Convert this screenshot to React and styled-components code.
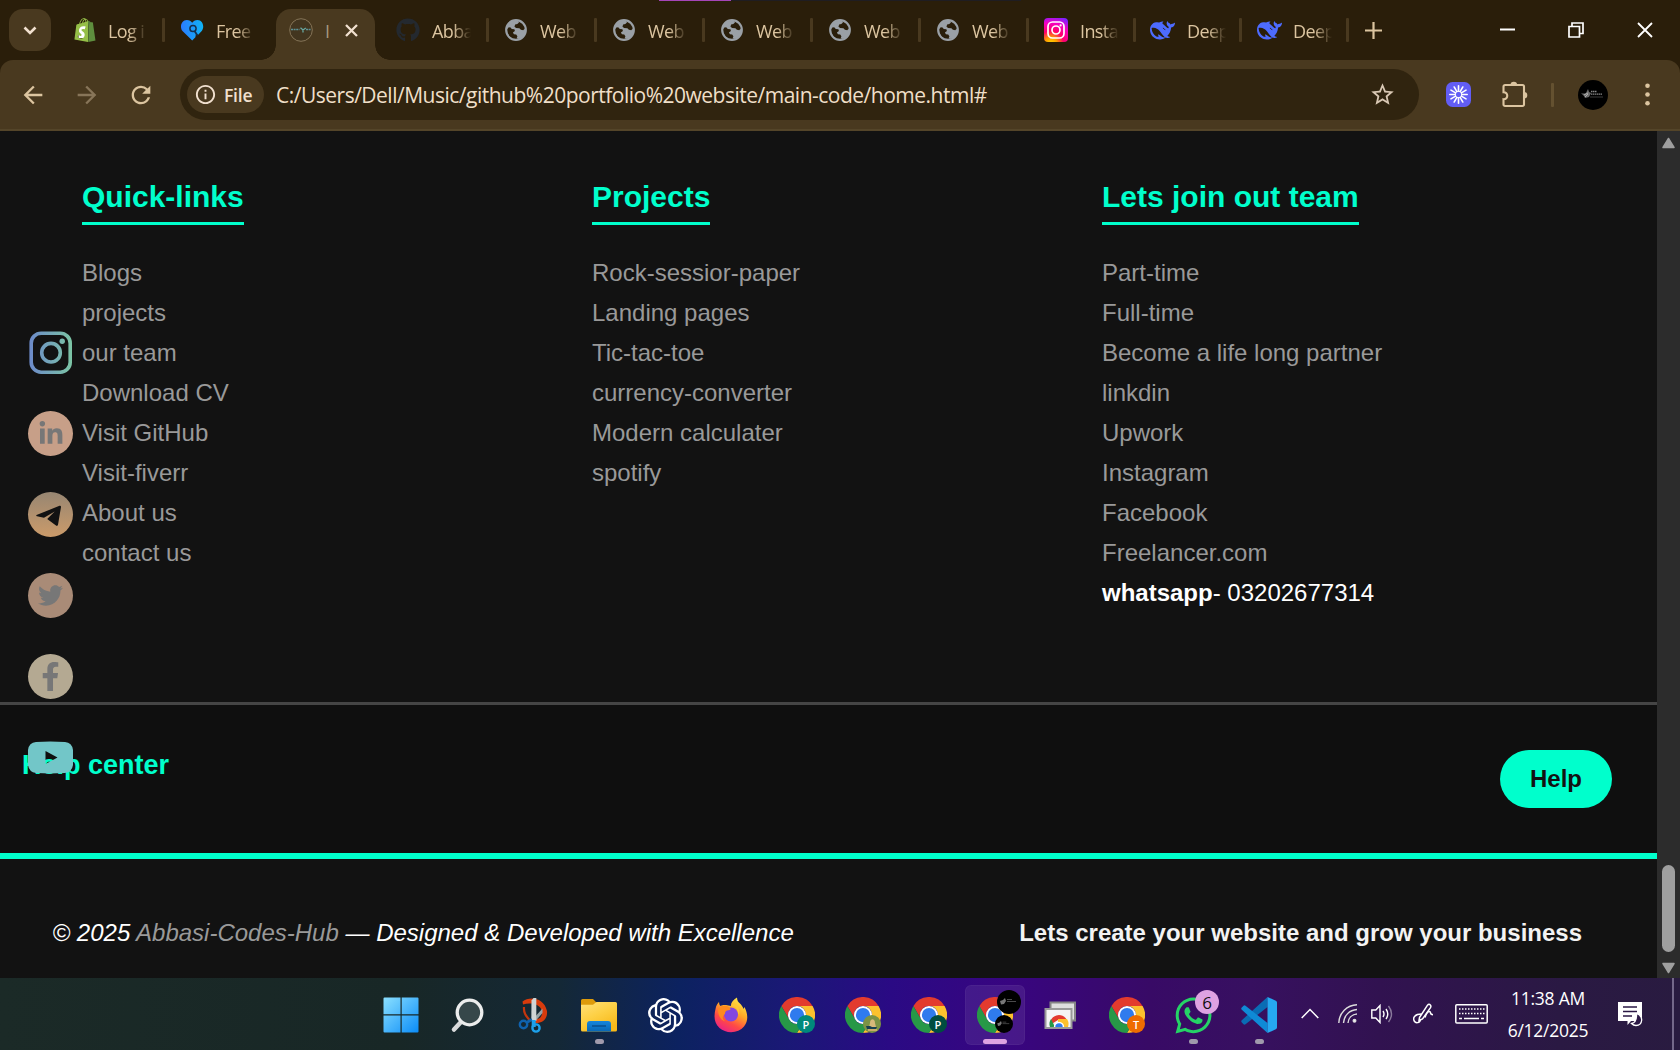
import React from 'react';
import styled, { createGlobalStyle, css } from 'styled-components';
import { MdArrowBack, MdArrowForward, MdRefresh, MdStarOutline, MdInfoOutline } from 'react-icons/md';
import { FaGithub, FaWhatsapp, FaTwitter, FaLinkedinIn, FaFacebookF } from 'react-icons/fa';
import { SiShopify, SiOpenai } from 'react-icons/si';

const Global = createGlobalStyle`
  * { box-sizing: border-box; }
  html, body { margin: 0; padding: 0; background: #121212; overflow: hidden; }
  ul { list-style: none; margin: 0; padding: 0; }
  h2, h3, p { margin: 0; }
  svg { display: block; flex: none; }
`;

const ui = css`font-family: "Open Sans", "Noto Sans", sans-serif;`;
const arial = css`font-family: "Liberation Sans", Arial, sans-serif;`;

const Screen = styled.div`
  width: 1680px;
  height: 1050px;
  display: flex;
  flex-direction: column;
  overflow: hidden;
`;

/* ---------- Tab strip ---------- */
const TabStrip = styled.div`
  ${ui}
  height: 60px;
  flex: none;
  background: #2a1e0a;
  display: flex;
  padding: 0 27px 0 9px;
`;
const StripEdge = styled.div`
  position: absolute;
  top: 0;
  left: 659px;
  width: 362px;
  height: 1px;
  background: linear-gradient(90deg, #a545b8 72px, #1f1d22 72px);
`;
const TabSearch = styled.button`
  width: 42px;
  height: 42px;
  margin: 9px 6px 0 0;
  padding: 0;
  border: 0;
  border-radius: 14px;
  background: #49391f;
  display: flex;
  align-items: center;
  justify-content: center;
`;
const Tab = styled.div`
  width: ${p => p.$w || 108}px;
  height: 60px;
  display: flex;
  align-items: center;
  padding-left: ${p => 16 - (p.$shift || 0)}px;
`;
const TabIcon = styled.div`
  width: 24px;
  height: 24px;
  display: flex;
  align-items: center;
  justify-content: center;
`;
const TabTitle = styled.span`
  width: 42px;
  margin-left: ${p => 11 + (p.$shift || 0)}px;
  padding-top: 2px;
  white-space: nowrap;
  font-size: 18px;
  line-height: 26px;
  letter-spacing: -0.6px;
  color: #dcc5a0;
  -webkit-mask-image: linear-gradient(90deg, #000 50%, transparent 93%);
  mask-image: linear-gradient(90deg, #000 50%, transparent 93%);
`;
const TabDivider = styled.i`
  width: 3px;
  height: 24px;
  margin-left: auto;
  border-radius: 1px;
  background: ${p => (p.$hidden ? 'transparent' : '#49391f')};
`;
const ActiveTab = styled.div`
  position: relative;
  width: 99px;
  height: 51px;
  margin: 9px 6px 0 3px;
  border-radius: 15px 15px 0 0;
  background: #49391f;
  display: flex;
  align-items: center;
  padding: 0 0 9px 13px;
  &::before, &::after {
    content: '';
    position: absolute;
    bottom: 0;
    width: 15px;
    height: 15px;
  }
  &::before { left: -15px; background: radial-gradient(circle at 0 0, transparent 14.5px, #49391f 15px); }
  &::after { right: -15px; background: radial-gradient(circle at 100% 0, transparent 14.5px, #49391f 15px); }
`;
const ActiveTitle = styled.span`
  width: 8px;
  margin-left: 12px;
  font-size: 18px;
  line-height: 24px;
  color: #a4977f;
  padding-top: 2px;
`;
const CloseTab = styled.span`
  margin-left: 12px;
  margin-top: 1px;
`;
const NewTab = styled.div`
  margin: 22px 0 0 16px;
`;
const WindowButtons = styled.div`
  margin-left: auto;
  height: 60px;
  display: flex;
  align-items: center;
  gap: 53px;
`;

/* ---------- Toolbar ---------- */
const ToolbarBack = styled.div`
  flex: none;
  background: #2a1e0a;
`;
const Toolbar = styled.div`
  ${ui}
  height: 71px;
  background: #49391f;
  border-bottom: 2px solid #544529;
  border-radius: 13px 13px 0 0;
  display: flex;
  align-items: center;
  padding: 0 28px 0 19px;
`;
const NavIcons = styled.div`
  display: flex;
  gap: 26px;
  color: #dcc5a0;
  padding-top: 1px;
`;
const Dim = styled.span`color: #877559;`;
const Omnibox = styled.div`
  width: 1239px;
  height: 51px;
  margin-left: 25px;
  padding: 0 23px 0 7px;
  border-radius: 26px;
  background: #30240f;
  display: flex;
  align-items: center;
`;
const FileChip = styled.div`
  width: 77px;
  height: 37px;
  border-radius: 19px;
  background: #49391f;
  color: #f1e0cf;
  display: flex;
  align-items: center;
  gap: 7px;
  padding-left: 7px;
  font-size: 17.5px;
  font-weight: 600;
  letter-spacing: -0.2px;
`;
const Url = styled.span`
  margin-left: 12px;
  font-size: 21px;
  line-height: 30px;
  letter-spacing: -0.5px;
  color: #efdfc8;
  white-space: nowrap;
`;
const StarSlot = styled.span`
  margin-left: auto;
  color: #d9c8b4;
`;
const Actions = styled.div`
  flex: 1;
  display: flex;
  align-items: center;
  padding-left: 27px;
`;
const ToolbarRule = styled.i`
  width: 3px;
  height: 24px;
  margin: 0 24px 0 23px;
  border-radius: 1px;
  background: #645130;
`;

/* ---------- Page ---------- */
const Viewport = styled.div`
  ${arial}
  height: 847px;
  flex: none;
  display: flex;
  background: #121212;
`;
const Page = styled.main`
  position: relative;
  width: 1657px;
`;
const Links = styled.section`
  height: 574px;
  border-bottom: 3px solid #454545;
  display: grid;
  grid-template-columns: repeat(3, 510px);
  padding: 49px 0 0 82px;
`;
const Heading = styled.h2`
  width: fit-content;
  font-size: 30px;
  line-height: 34px;
  height: 45px;
  border-bottom: 3px solid #00ffcc;
  color: #00ffcc;
`;
const List = styled.ul`
  padding-top: 28px;
  font-size: 24px;
  line-height: 40px;
  color: #999;
`;
const Contact = styled.li`color: #fff;`;
const HelpBar = styled.section`
  height: 154px;
  border-bottom: 6px solid #00ffcc;
  background: #0f0f0f;
  display: flex;
  justify-content: space-between;
  align-items: flex-start;
  padding: 45px 45px 0 22px;
`;
const HelpTitle = styled.h3`
  font-size: 27px;
  line-height: 30px;
  color: #00ffcc;
`;
const HelpButton = styled.button`
  ${arial}
  width: 112px;
  height: 58px;
  border: 0;
  border-radius: 29px;
  background: #00ffcc;
  color: #121212;
  font-size: 24px;
  font-weight: 700;
`;
const Bottom = styled.footer`
  height: 119px;
  display: flex;
  justify-content: space-between;
  padding: 60px 75px 0 52.500px;
  font-size: 24px;
  line-height: 28px;
  color: #fff;
  white-space: nowrap;
`;
const Copyright = styled.p`font-style: italic;`;
const Brand = styled.span`color: #999;`;
const Slogan = styled.p`font-weight: 700; color: #f3f3f3;`;

const SocialRail = styled.nav`
  position: absolute;
  left: 28px;
  top: 199px;
  width: 45px;
  display: flex;
  flex-direction: column;
  gap: 36px;
`;
const Social = styled.a`
  width: 45px;
  height: 45px;
  border-radius: 50%;
  background: ${p => p.$bg || 'none'};
  color: #777;
  display: flex;
  align-items: center;
  justify-content: center;
`;

const ScrollBar = styled.aside`
  width: 23px;
  background: #2c2c2c;
  display: flex;
  flex-direction: column;
  align-items: center;
  padding: 6px 0 4px;
`;
const Thumb = styled.div`
  width: 13px;
  height: 87px;
  margin: auto 0 10px;
  border-radius: 7px;
  background: #9f9f9f;
`;

/* ---------- Taskbar ---------- */
const Taskbar = styled.div`
  ${ui}
  height: 72px;
  flex: none;
  display: flex;
  padding-left: 368px;
  background: linear-gradient(92deg, #1b2a27 0, #182726 400px, #142836 560px, #0c2260 680px, #1a1876 790px, #2a0a84 890px, #380580 1010px, #380a66 1150px, #371060 1250px, #311250 1380px, #2a1943 1560px, #291b40 1680px);
`;
const Slot = styled.div`
  width: 66px;
  padding: 7px 3px 0;
`;
const Tile = styled.div`
  width: 60px;
  height: 60px;
  border-radius: 6px;
  padding-top: 12px;
  display: flex;
  flex-direction: column;
  align-items: center;
  gap: 6px;
  background: ${p => (p.$active ? 'rgba(255,255,255,.08)' : 'none')};
  box-shadow: ${p => (p.$active ? 'inset 0 0 0 1px rgba(255,255,255,.04)' : 'none')};
`;
const AppIcon = styled.div`
  position: relative;
  width: 36px;
  height: 36px;
  display: flex;
  align-items: center;
  justify-content: center;
`;
const Running = styled.i`
  width: ${p => (p.$active ? 24 : 9)}px;
  height: 5px;
  border-radius: 3px;
  background: ${p => (p.$active ? '#dea2e2' : '#a09aac')};
`;
const Badge = styled.span`
  position: absolute;
  right: ${p => p.$right || 0}px;
  ${p => (p.$top !== undefined ? `top: ${p.$top}px;` : 'bottom: 0;')}
  width: ${p => p.$size || 18}px;
  height: ${p => p.$size || 18}px;
  border-radius: 50%;
  background: ${p => p.$bg};
  color: ${p => p.$fg || '#fff'};
  font-size: ${p => p.$font || 11}px;
  font-weight: ${p => p.$weight || 600};
  display: flex;
  align-items: center;
  justify-content: center;
  line-height: 1;
  svg { max-width: 100%; max-height: 100%; }
`;
const Tray = styled.div`
  flex: 1;
  display: flex;
  align-items: center;
  padding: 0 6px 1px 9px;
  color: #fff;
`;
const TrayItem = styled.span`margin-left: ${p => p.$ml || 0}px;`;
const Clock = styled.div`
  width: 90px;
  margin: 1px 0 0 15px;
  text-align: center;
  font-size: 17.5px;
  line-height: 32px;
  letter-spacing: -0.25px;
  white-space: nowrap;
`;
const ShowDesktop = styled.i`
  width: 2px;
  height: 72px;
  margin: 1px 0 0 auto;
  background: #74688a;
`;

/* ---------- Icons ---------- */
const Shopify = () => (
  <svg width="24" height="24" viewBox="0 0 24 24">
    <defs>
      <linearGradient id="bag"><stop offset=".66" stopColor="#95bf47" /><stop offset=".66" stopColor="#5e8e3e" /></linearGradient>
    </defs>
    <path d="M5.500 8h8v12h-8z" fill="#fff" />
    <SiShopify size={24} fill="url(#bag)" />
  </svg>
);
const Heart = () => (
  <svg width="24" height="24" viewBox="0 0 24 24">
    <defs><linearGradient id="heart"><stop stopColor="#2b7bff" /><stop offset="1" stopColor="#0fb4f5" /></linearGradient></defs>
    <path d="M11.200 22.500L1.500 13C-1.500 9.500 0 2.200 5.800 2c2.600 0 4.200 1.200 5.400 2.800C12.300 3.200 14 2 16.500 2c5.500.1 7.300 7.300 4.200 11l-3.500 3.700-2.300-1-.5 3.500z" fill="url(#heart)" />
    <circle cx="12" cy="10.500" r="3.100" fill="none" stroke="#14304e" strokeWidth="1.500" />
    <path d="M13.500 13l3 4.500" stroke="#14304e" strokeWidth="1.800" />
  </svg>
);
const RoundLogo = () => (
  <svg width="24" height="24" viewBox="0 0 24 24">
    <circle cx="12" cy="12" r="11.300" fill="#42351f" stroke="#857457" strokeWidth="1" />
    <path d="M2 11.500h8.500M17 11.500h5" stroke="#5c9296" strokeWidth="1.400" strokeDasharray="2 .6" />
    <path d="M11.500 9.800l2.500 2.200 2.800-2M14 12v2.500" stroke="#68a8a2" strokeWidth="1.300" fill="none" />
  </svg>
);
const Globe = () => (
  <svg width="22" height="22" viewBox="0 0 22 22">
    <circle cx="11" cy="11" r="9.800" fill="#2a1e0a" stroke="#9aa0a6" strokeWidth="2.200" />
    <path d="M1.500 11C1.500 5 6 1.200 12.500 1.400L14 3.400l-1.700 1.700-2.200.5-.6 2.100 1.600 1.300 3.300.2 1.500 1.600 2.300.4 1.200-1.300 1.500.8c-.3 4.300-2.900 7.800-6.900 9.200l-2.300-.6.700-2-1.200-1.900-2.300-.2-1-1.800 2-1.500-.5-1.700-2.600-.2-1.600-1.800-1.800.3z" fill="#9aa0a6" />
    <path d="M3 12.500c.3 3.500 2.800 6 6 6.600l1-2.300-1.800-1.100-.6-2.200-2-1z" fill="#2a1e0a" />
  </svg>
);
const Whale = () => (
  <svg width="25" height="25" viewBox="0 0 24 24" fill="#4d6bfe">
    <path fillRule="evenodd" d="M23.748 4.482c-.254-.124-.364.113-.512.234-.051.039-.094.09-.137.136-.372.397-.806.657-1.373.626-.829-.046-1.537.214-2.163.848-.133-.782-.575-1.248-1.247-1.548-.352-.156-.708-.311-.955-.65-.172-.241-.219-.51-.305-.774-.055-.16-.11-.323-.293-.35-.2-.031-.278.136-.356.276-.313.572-.434 1.202-.422 1.840.027 1.436.633 2.580 1.838 3.393.137.093.172.187.129.323-.082.280-.18.552-.266.833-.055.179-.137.217-.329.140a5.526 5.526 0 0 1-1.736-1.180c-.857-.828-1.631-1.742-2.597-2.458a11.365 11.365 0 0 0-.689-.471c-.985-.957.130-1.743.388-1.836.270-.098.093-.432-.779-.428-.872.004-1.670.295-2.687.684a3.055 3.055 0 0 1-.465.137 9.597 9.597 0 0 0-2.883-.102c-1.885.210-3.390 1.102-4.497 2.623C.082 8.606-.231 10.684.152 12.850c.403 2.284 1.569 4.175 3.360 5.653 1.858 1.533 3.997 2.284 6.438 2.140 1.482-.085 3.133-.284 4.994-1.860.470.234.962.327 1.780.397.630.059 1.236-.03 1.705-.128.735-.156.684-.837.419-.961-2.155-1.004-1.682-.595-2.113-.926 1.096-1.296 2.746-2.642 3.392-7.003.050-.347.007-.565 0-.845-.004-.17.035-.237.230-.256a4.173 4.173 0 0 0 1.545-.475c1.396-.763 1.960-2.015 2.093-3.517.020-.23-.004-.467-.247-.588zM11.581 18c-2.089-1.642-3.102-2.183-3.520-2.160-.392.024-.321.471-.235.763.090.288.207.486.371.739.114.167.192.416-.113.603-.673.416-1.842-.14-1.897-.167-1.361-.802-2.500-1.860-3.301-3.307-.774-1.393-1.224-2.887-1.298-4.482-.02-.386.093-.522.477-.592a4.696 4.696 0 0 1 1.529-.039c2.132.312 3.946 1.265 5.468 2.774.868.860 1.525 1.887 2.202 2.891.720 1.066 1.494 2.082 2.480 2.914.348.292.625.514.891.677-.802.090-2.140.110-3.054-.614z" />
    <path d="M12.400 9.700c1 .2 1.600 1 2.200 1.900" stroke="#2a1e0a" strokeWidth=".8" fill="none" />
  </svg>
);
const InstaTile = () => (
  <svg width="24" height="24" viewBox="0 0 24 24">
    <defs>
      <radialGradient id="ig" cx=".3" cy="1.050" r="1.150">
        <stop stopColor="#ffd600" /><stop offset=".22" stopColor="#ff9a00" /><stop offset=".45" stopColor="#ff0069" /><stop offset=".75" stopColor="#f400c4" /><stop offset="1" stopColor="#7d20ff" />
      </radialGradient>
    </defs>
    <rect width="24" height="24" rx="4" fill="url(#ig)" />
    <rect x="4" y="4" width="16" height="16" rx="4.500" fill="none" stroke="#fff" strokeWidth="1.700" />
    <circle cx="12" cy="12" r="4" fill="none" stroke="#fff" strokeWidth="1.700" />
    <circle cx="16.600" cy="7.400" r="1.100" fill="#fff" />
  </svg>
);
const Extension = () => (
  <svg width="25" height="25" viewBox="0 0 25 25">
    <rect width="25" height="25" rx="6.500" fill="#625df5" />
    {Array.from({ length: 12 }, (_, i) => (
      <path key={i} d="M12.500 3.800v5.400" stroke="#fff" strokeWidth="1.600" strokeLinecap="round" transform={`rotate(${i * 30} 12.500 12.500)`} />
    ))}
    <circle cx="12.500" cy="12.500" r="3.400" fill="none" stroke="#fff" strokeWidth="1" />
  </svg>
);
const Puzzle = () => (
  <svg width="26" height="27" viewBox="0 0 26 27">
    <path d="M3 4h17.500a1.500 1.500 0 0 1 1.500 1.500v18a1.500 1.500 0 0 1-1.500 1.500H3a1.500 1.500 0 0 1-1.500-1.500v-5.300c5 .2 5-7.200 0-7V5.500A1.500 1.500 0 0 1 3 4z" fill="none" stroke="#dcc5a0" strokeWidth="2.100" />
    <path d="M8.500 4a3.300 3.300 0 0 1 6.600 0zM22 10.900a3.300 3.300 0 0 1 0 6.600z" fill="#dcc5a0" />
  </svg>
);
const DarkMark = () => (
  <svg width="30" height="30" viewBox="0 0 30 30">
    <circle cx="15" cy="15" r="15" fill="#000" />
    <path d="M3 13q3 1 5 0l2-4 1 3 2 1-2 4-4 1-1-2z" fill="#6d6d6d" />
    <path d="M6 15l4-2M7 17l3-3" stroke="#ccc" strokeWidth=".7" />
    <path d="M13 11.500h6M13 14.200h11" stroke="#888" strokeWidth="1.300" strokeDasharray="1.500 .5" />
    <path d="M12 17h13" stroke="#4c4c4c" strokeWidth=".8" />
  </svg>
);
const SmallMark = () => (
  <svg width="24" height="24" viewBox="0 0 24 24">
    <path d="M3 11q3 0 5-3l1 3-2 3-3 .5z" fill="#777" />
    <path d="M10 9.500h5M10 11.500h9" stroke="#4a4a4a" strokeWidth="1.100" />
  </svg>
);
const Chrome = () => (
  <svg width="36" height="36" viewBox="0 0 48 48">
    <path d="M3.200 12A24 24 0 0 1 44.800 12H24A12 12 0 0 0 13.600 30z" fill="#e33b2e" />
    <path d="M44.800 12A24 24 0 0 1 24 48L34.400 30A12 12 0 0 0 24 12z" fill="#fcc12d" />
    <path d="M3.200 12A24 24 0 0 0 24 48L34.400 30A12 12 0 0 1 13.600 30z" fill="#279847" />
    <circle cx="24" cy="24" r="12" fill="#fff" />
    <circle cx="24" cy="24" r="9.500" fill="#2f7bee" />
  </svg>
);
const WindowsLogo = () => (
  <svg width="36" height="36" viewBox="0 0 36 36">
    <defs><linearGradient id="win" x2="1" y2="1"><stop stopColor="#8be0ff" /><stop offset="1" stopColor="#0a8cf8" /></linearGradient></defs>
    <path d="M1.500.5H17.500V17.200H.5V1.500a1 1 0 0 1 1-1zM18.700.5H34.500a1 1 0 0 1 1 1V17.200H18.700zM.5 18.400H17.500V35.500H1.500a1 1 0 0 1-1-1zM18.700 18.400H35.500V34.500a1 1 0 0 1-1 1H18.700z" fill="url(#win)" />
  </svg>
);
const SearchIcon = () => (
  <svg width="36" height="36" viewBox="0 0 36 36">
    <path d="M12 25L5 32.500" stroke="#d8dadb" strokeWidth="4.500" strokeLinecap="round" />
    <circle cx="20.500" cy="15.500" r="12.300" fill="#36474a" stroke="#eceded" strokeWidth="3.300" />
  </svg>
);
const Snip = () => (
  <svg width="36" height="36" viewBox="0 0 36 36" fill="none">
    <path d="M7.500 4.500C14-1 29 0 32 14c.8 8-4.500 12.500-12 12l1-4c5 0 7-4 5.500-9C24.500 6.500 14.500 5.500 8 7.500z" fill="#d83b0c" />
    <path d="M9 10c-.5 6 2 9 5.500 13" stroke="#c3360e" strokeWidth="2.200" />
    <path d="M18 22L27.500 11.500v4.500L20.500 24z" fill="#98a4a8" />
    <path d="M16.500 3.500L18.500 1h2.800v23h-5z" fill="#cfd4d6" />
    <circle cx="8.500" cy="27.500" r="3.700" stroke="#0f62ae" strokeWidth="2.400" />
    <path d="M11.500 25.500L17 22.500" stroke="#0f62ae" strokeWidth="2.800" />
    <circle cx="21" cy="31" r="3.600" stroke="#1da0ea" strokeWidth="2.400" />
    <path d="M18.700 23v7" stroke="#1da0ea" strokeWidth="4" />
  </svg>
);
const Folder = () => (
  <svg width="36" height="36" viewBox="0 0 36 36">
    <defs>
      <linearGradient id="fol" x2=".6" y2="1"><stop stopColor="#ffe07a" /><stop offset=".5" stopColor="#fdd045" /><stop offset="1" stopColor="#f8b91a" /></linearGradient>
      <linearGradient id="folb" x2="0" y2="1"><stop stopColor="#1686dc" /><stop offset="1" stopColor="#0867b5" /></linearGradient>
    </defs>
    <path d="M0 3.500A1.500 1.500 0 0 1 1.500 2H12l3.500 3.500V12H0z" fill="#dd9a0b" />
    <path d="M0 7.800h12L15.500 5H34.500A1.500 1.500 0 0 1 36 6.500V33a1.500 1.500 0 0 1-1.500 1.500h-33A1.500 1.500 0 0 1 0 33z" fill="url(#fol)" />
    <path d="M6 34.500V27a3 3 0 0 1 3-3H27a3 3 0 0 1 3 3v7.500z" fill="url(#folb)" />
    <path d="M11 29h14" stroke="#07457f" strokeWidth="1.200" />
  </svg>
);
const Firefox = () => (
  <svg width="36" height="36" viewBox="0 0 36 36">
    <defs>
      <linearGradient id="fx" x1=".8" x2=".25" y2="1"><stop stopColor="#fff04a" /><stop offset=".4" stopColor="#ffa726" /><stop offset=".7" stopColor="#ff4a45" /><stop offset="1" stopColor="#e91e8c" /></linearGradient>
    </defs>
    <path d="M2.500 12C3 8.500 5 6 6 5c.2 2 .5 3 1.500 4C9.500 7.500 12 8 13 8l5 1C17.500 6 20 3 24 .5c.2 3.200 1 4.500 3.500 6.500 1 1 2.500 3 3 5l1-2c3 6 4.500 13-.5 19.500-5.500 7-18 7.500-24.500 1.500C.5 25.500 1 18 2.500 12z" fill="url(#fx)" />
    <circle cx="18" cy="17.500" r="7" fill="#8247e0" />
    <path d="M5 12.500c2-3.500 5-4 8-3.800 1 .2 3 1 4.500 3 .6 1-1 1.500-3.500 1.800-2 .8-2 2.500-2 3.500-3 2-3 5.500.5 7.500-4-1-7.500-5-7.500-12z" fill="#ff8a1e" />
    <path d="M18 9c4-.5 7.500 3 7 8.500 1.500-1.500 1.500-4.500.5-6.500-1-2.500-3.500-4-4.500-5z" fill="#ffc934" />
  </svg>
);
const RemoteDesk = () => (
  <svg width="36" height="36" viewBox="0 0 36 36">
    <path d="M7.500 5.500h24.500v18H7.500z" fill="#dedede" stroke="#858585" strokeWidth="2" />
    <path d="M2.500 12h26v19h-26z" fill="#f5f5f5" stroke="#999" strokeWidth="2" />
    <path d="M7 28A9 9 0 0 1 24 23H15z" fill="#e33b2e" />
    <path d="M7 30A9 9 0 0 1 8 22l4 8z" fill="#279847" />
    <path d="M15 22h9a9 9 0 0 1 1 8H15z" fill="#fcc12d" />
    <path d="M10.800 30a5 5 0 0 1 10.400 0z" fill="#fff" />
    <path d="M12.300 30a3.700 3.700 0 0 1 7.400 0z" fill="#2f7bee" />
  </svg>
);
const VSCode = () => (
  <svg width="36" height="36" viewBox="0 0 36 36">
    <path d="M26.500 0v10L4.500 27.300a1.500 1.500 0 0 1-2 0L.8 25.500a1.600 1.600 0 0 1 0-2.300z" fill="#0a6cb4" />
    <path d="M.8 10.500l1.700-1.700a1.500 1.500 0 0 1 2 0L26.500 26v10L.8 12.800a1.600 1.600 0 0 1 0-2.300z" fill="#0f8ad6" />
    <path d="M26.500 0l8.300 3.700A2 2 0 0 1 36 5.500v25a2 2 0 0 1-1.200 1.800L26.500 36z" fill="#26a9f1" />
  </svg>
);
const Face = () => (
  <svg width="18" height="18" viewBox="0 0 18 18">
    <circle cx="9" cy="9" r="9" fill="#7c9345" />
    <path d="M7 8c0-5 5-5 5 0l1 4H6z" fill="#d8b87a" />
    <path d="M3 11h4l2 1h5l-1 2H4z" fill="#183f52" />
    <path d="M5 14h9v2H5z" fill="#c9ac68" />
  </svg>
);
const Arrow = ({ down }) => (
  <svg width="15" height="12" viewBox="0 0 15 12">
    <path d={down ? 'M2 1.500h11L7.500 10.500z' : 'M2 10.500h11L7.500 1.500z'} fill="#9f9f9f" stroke="#9f9f9f" strokeWidth="1.500" strokeLinejoin="round" />
  </svg>
);

const iconFor = {
  shopify: <Shopify />,
  heart: <Heart />,
  github: <FaGithub size={24} color="#24292f" />,
  globe: <Globe />,
  insta: <InstaTile />,
  whale: <Whale />,
};

const TabItem = ({ icon, title, w, shift, last }) => (
  <Tab $w={w} $shift={shift}>
    <TabIcon>{iconFor[icon]}</TabIcon>
    <TabTitle $shift={shift}>{title}</TabTitle>
    <TabDivider $hidden={last} />
  </Tab>
);

const columns = [
  { title: 'Quick-links', items: ['Blogs', 'projects', 'our team', 'Download CV', 'Visit GitHub', 'Visit-fiverr', 'About us', 'contact us'] },
  { title: 'Projects', items: ['Rock-sessior-paper', 'Landing pages', 'Tic-tac-toe', 'currency-converter', 'Modern calculater', 'spotify'] },
  {
    title: 'Lets join out team',
    items: ['Part-time', 'Full-time', 'Become a life long partner', 'linkdin', 'Upwork', 'Instagram', 'Facebook', 'Freelancer.com'],
    phone: '03202677314',
  },
];

const apps = [
  { icon: <WindowsLogo /> },
  { icon: <SearchIcon /> },
  { icon: <Snip /> },
  { icon: <Folder />, running: true },
  { icon: <SiOpenai size={35} color="#fff" /> },
  { icon: <Firefox /> },
  { icon: <><Chrome /><Badge $bg="#00897b">P</Badge></> },
  { icon: <><Chrome /><Badge $bg="none"><Face /></Badge></> },
  { icon: <><Chrome /><Badge $bg="#004d40">P</Badge></> },
  {
    icon: (
      <>
        <Chrome />
        <Badge $bg="#000" $size={24} $top={-7} $right={-8}><SmallMark /></Badge>
        <Badge $bg="#000"><SmallMark /></Badge>
      </>
    ),
    running: true,
    active: true,
  },
  { icon: <RemoteDesk /> },
  { icon: <><Chrome /><Badge $bg="#ef6c00">T</Badge></> },
  {
    icon: <><FaWhatsapp size={41} color="#25d366" /><Badge $bg="#dea2e2" $fg="#111" $size={24} $top={-7} $right={-8} $font={17} $weight={400}>6</Badge></>,
    running: true,
  },
  { icon: <VSCode />, running: true },
];

export default function App() {
  return (
    <Screen>
      <Global />
      <TabStrip>
        <StripEdge />
        <TabSearch>
          <svg width="14" height="9" viewBox="0 0 14 9"><path d="M1.500 1.500L7 7l5.500-5.500" fill="none" stroke="#f1e0cf" strokeWidth="2.600" /></svg>
        </TabSearch>
        <TabItem icon="shopify" title="Log i" />
        <TabItem icon="heart" title="Free" last />
        <ActiveTab>
          <RoundLogo />
          <ActiveTitle>I</ActiveTitle>
          <CloseTab>
            <svg width="13" height="13" viewBox="0 0 13 13"><path d="M1 1l11 11M12 1L1 12" stroke="#f1e0cf" strokeWidth="2.300" /></svg>
          </CloseTab>
        </ActiveTab>
        <TabItem icon="github" title="Abba" shift={1} />
        <TabItem icon="globe" title="Web" shift={1} />
        <TabItem icon="globe" title="Web" shift={1} />
        <TabItem icon="globe" title="Web" shift={1} />
        <TabItem icon="globe" title="Web" shift={1} />
        <TabItem icon="globe" title="Web" shift={1} />
        <TabItem icon="insta" title="Insta" w={107} shift={1} />
        <TabItem icon="whale" title="Deep" w={106} shift={2} />
        <TabItem icon="whale" title="Deep" w={107} shift={1} />
        <NewTab>
          <svg width="17" height="17" viewBox="0 0 17 17"><path d="M8.500 0v17M0 8.500h17" stroke="#dcc5a0" strokeWidth="2.200" /></svg>
        </NewTab>
        <WindowButtons>
          <svg width="15" height="16" viewBox="0 0 15 16"><path d="M0 7.500h15" stroke="#fff" strokeWidth="2" /></svg>
          <svg width="16" height="16" viewBox="0 0 16 16"><path d="M1 4.500h10.500V15H1zM4 4V1h11v10.500h-3" fill="none" stroke="#fff" strokeWidth="1.700" /></svg>
          <svg width="16" height="16" viewBox="0 0 16 16"><path d="M1 1l14 14M15 1L1 15" stroke="#fff" strokeWidth="1.800" /></svg>
        </WindowButtons>
      </TabStrip>

      <ToolbarBack>
        <Toolbar>
          <NavIcons>
            <MdArrowBack size={28} />
            <Dim><MdArrowForward size={28} /></Dim>
            <MdRefresh size={28} />
          </NavIcons>
          <Omnibox>
            <FileChip><MdInfoOutline size={23} />File</FileChip>
            <Url>C:/Users/Dell/Music/github%20portfolio%20website/main-code/home.html#</Url>
            <StarSlot><MdStarOutline size={27} /></StarSlot>
          </Omnibox>
          <Actions>
            <Extension />
            <TrayItem $ml={31}><Puzzle /></TrayItem>
            <ToolbarRule />
            <DarkMark />
            <TrayItem $ml={37}>
              <svg width="5" height="23" viewBox="0 0 5 23" fill="#dcc5a0"><circle cx="2.500" cy="2.800" r="2.300" /><circle cx="2.500" cy="11.500" r="2.300" /><circle cx="2.500" cy="20.200" r="2.300" /></svg>
            </TrayItem>
          </Actions>
        </Toolbar>
      </ToolbarBack>

      <Viewport>
        <Page>
          <Links>
            {columns.map(c => (
              <div key={c.title}>
                <Heading>{c.title}</Heading>
                <List>
                  {c.items.map(i => <li key={i}>{i}</li>)}
                  {c.phone && <Contact><b>whatsapp</b>- {c.phone}</Contact>}
                </List>
              </div>
            ))}
          </Links>
          <HelpBar>
            <HelpTitle>Help center</HelpTitle>
            <HelpButton>Help</HelpButton>
          </HelpBar>
          <Bottom>
            <Copyright>© 2025 <Brand>Abbasi-Codes-Hub</Brand> — Designed &amp; Developed with Excellence</Copyright>
            <Slogan>Lets create your website and grow your business</Slogan>
          </Bottom>
          <SocialRail>
            <Social>
              <svg width="45" height="45" viewBox="0 0 45 45" fill="none" stroke="url(#soc)" strokeWidth="3.600">
                <defs><linearGradient id="soc" gradientUnits="userSpaceOnUse" x1="0" x2="45" y1="0" y2="0"><stop stopColor="#6c88cb" /><stop offset="1" stopColor="#7cc6a4" /></linearGradient></defs>
                <rect x="3.200" y="3.200" width="39" height="39" rx="10" />
                <circle cx="23" cy="22.700" r="9.300" />
                <circle cx="34.200" cy="11.200" r="2.700" fill="url(#soc)" stroke="none" />
              </svg>
            </Social>
            <Social $bg="#c79f88"><FaLinkedinIn size={26} /></Social>
            <Social $bg="linear-gradient(#978672, #cb9b6a)">
              <svg width="45" height="45" viewBox="0 0 45 45"><path d="M8.500 23L31.500 13.800q1.500-.4 1.500 1.200L30 32.800q-.5 1.800-2 .8L19.200 27l7.500-7.600L16 25.800 9 24.200q-1.200-.6-.5-1.200z" fill="#121212" /></svg>
            </Social>
            <Social $bg="#a98b77"><FaTwitter size={25} /></Social>
            <Social $bg="#b4a992"><FaFacebookF size={29} /></Social>
            <Social>
              <svg width="45" height="45" viewBox="0 0 45 45"><path fillRule="evenodd" fill="#72c6c8" d="M8 7Q22 6 37 7q7 .5 8 8v15q-1 7-8 8-15 .8-29 0-7-1-8-8V15Q1 7.500 8 7zM17.500 16v13l12-6.500z" /></svg>
            </Social>
          </SocialRail>
        </Page>
        <ScrollBar>
          <Arrow />
          <Thumb />
          <Arrow down />
        </ScrollBar>
      </Viewport>

      <Taskbar>
        {apps.map((a, i) => (
          <Slot key={i}>
            <Tile $active={a.active}>
              <AppIcon>{a.icon}</AppIcon>
              {a.running && <Running $active={a.active} />}
            </Tile>
          </Slot>
        ))}
        <Tray>
          <TrayItem>
            <svg width="18" height="11" viewBox="0 0 18 11"><path d="M.7 10L9 1.500 17.300 10" fill="none" stroke="#fff" strokeWidth="1.500" /></svg>
          </TrayItem>
          <TrayItem $ml={19}>
            <svg width="19" height="19" viewBox="0 0 19 19" fill="none" stroke="#ddd" strokeWidth="1.400">
              <path d="M.8 19C1 9 9 1 19 .8M5.500 19C6 11.500 11.500 6 19 5.500" /><path d="M10 19c.4-5 4-8.600 9-9" /><circle cx="16.500" cy="16.800" r="1.300" fill="#fff" />
            </svg>
          </TrayItem>
          <TrayItem $ml={14}>
            <svg width="22" height="20" viewBox="0 0 22 20" fill="none" stroke="#fff" strokeWidth="1.400">
              <path d="M.8 6h4L9 1.500v17L4.800 14h-4z" /><path d="M12 7q2 3 0 6M15 5q3.500 5 0 10" /><path d="M17.500 2q6 8 0 16" stroke="#8a7a9c" />
            </svg>
          </TrayItem>
          <TrayItem $ml={20}>
            <svg width="21" height="21" viewBox="0 0 21 21" fill="none" stroke="#fff" strokeWidth="1.500">
              <path d="M6.500 14.500L14.500 2.200q1.500-1.700 3 0 .8 1 0 2.500L9.500 16l-3.500 1.500z" />
              <path d="M8.500 11C2 11-.5 14.500 1.200 18c1.500 2.500 5.500 2.500 6.500-2M12 14.500q2-6 4.500-6c2 0-.5 3 3.500 3.200" />
            </svg>
          </TrayItem>
          <TrayItem $ml={21}>
            <svg width="33" height="20" viewBox="0 0 33 20" fill="none" stroke="#fff" strokeWidth="1.500">
              <rect x=".8" y=".8" width="31.400" height="18.200" rx="1" /><path d="M4 5h25.500M4 9.500h25.500" strokeDasharray="1.500 1.500" /><path d="M4 14.500h3M9 14.500h15M26 14.500h3" />
            </svg>
          </TrayItem>
          <Clock>11:38 AM<br />6/12/2025</Clock>
          <TrayItem $ml={25}>
            <svg width="26" height="26" viewBox="0 0 26 26">
              <path d="M0 1h24v19H13l-3.500 4V20H0z" fill="#fff" />
              <path d="M5 6h14M5 10.500h14M5 15h9" stroke="#2b1845" strokeWidth="1.300" />
              <path d="M18.500 12.500q5 1.500 5.200 6.500-.5 5.500-5.700 5.500-2.500 0-4.500-2 5.500-1 5-10z" fill="#2b1845" stroke="#fff" strokeWidth="1.300" />
            </svg>
          </TrayItem>
          <ShowDesktop />
        </Tray>
      </Taskbar>
    </Screen>
  );
}
